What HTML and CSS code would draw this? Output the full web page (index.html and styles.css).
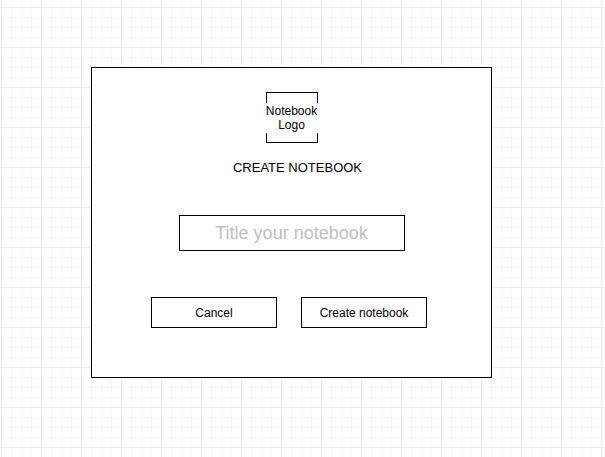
FILE: index.html
```html
<!DOCTYPE html>
<html lang="en">
<head>
  <meta charset="UTF-8">
  <title>Create Notebook</title>
  <link rel="stylesheet" href="styles.css">
</head>
<body>

<div class="dialog">
  <div class="logo">
    <span class="logo-text">Notebook<br>Logo</span>
  </div>

  <h1 class="heading">CREATE NOTEBOOK</h1>

  <input type="text" class="title-input" placeholder="Title your notebook">

  <div class="actions">
    <button type="button" class="button">Cancel</button>
    <button type="button" class="button">Create notebook</button>
  </div>
</div>

</body>
</html>
```

FILE: styles.css
```css
body {
  margin: 0;
  min-height: 457px;
  font-family: "Liberation Sans", Arial, Helvetica, sans-serif;
  color: #000;
  background-color: #fff;
  background-image:
    linear-gradient(to right, #ebebeb 1px, transparent 1px),
    linear-gradient(to bottom, #ebebeb 1px, transparent 1px),
    linear-gradient(to right, #f8f8f8 1px, transparent 1px),
    linear-gradient(to bottom, #f8f8f8 1px, transparent 1px);
  background-size: 40px 40px, 40px 40px, 10px 10px, 10px 10px;
  background-position: 1px 7px;
  overflow: hidden;
}
.dialog {
  box-sizing: border-box;
  width: 401px;
  height: 311px;
  margin: 67px 0 0 91px;
  padding-top: 24px;
  border: 1px solid #000;
  background: #fff;
  display: flex;
  flex-direction: column;
  align-items: center;
}
.logo {
  box-sizing: border-box;
  width: 52px;
  height: 51px;
  border: 1px solid #000;
  display: flex;
  align-items: center;
  justify-content: center;
}
.logo-text {
  background: #fff;
  font-size: 12px;
  line-height: 14px;
  text-align: center;
  padding: 1px 3px;
  white-space: nowrap;
}
.heading {
  margin: 17px 0 0 12px;
  font-size: 13px;
  line-height: 15px;
  font-weight: normal;
}
.title-input {
  box-sizing: border-box;
  width: 226px;
  height: 36px;
  margin-top: 40px;
  border: 1px solid #000;
  border-radius: 0;
  padding: 0;
  font-family: inherit;
  font-size: 18px;
  text-align: center;
  outline: none;
}
.title-input::placeholder {
  color: #bfbfbf;
}
.actions {
  align-self: stretch;
  display: flex;
  gap: 24px;
  margin-top: 46px;
  padding-left: 59px;
}
.button {
  box-sizing: border-box;
  width: 126px;
  height: 31px;
  border: 1px solid #000;
  border-radius: 0;
  background: #fff;
  color: #000;
  font-family: inherit;
  font-size: 12px;
  padding: 0;
  cursor: pointer;
}
```
